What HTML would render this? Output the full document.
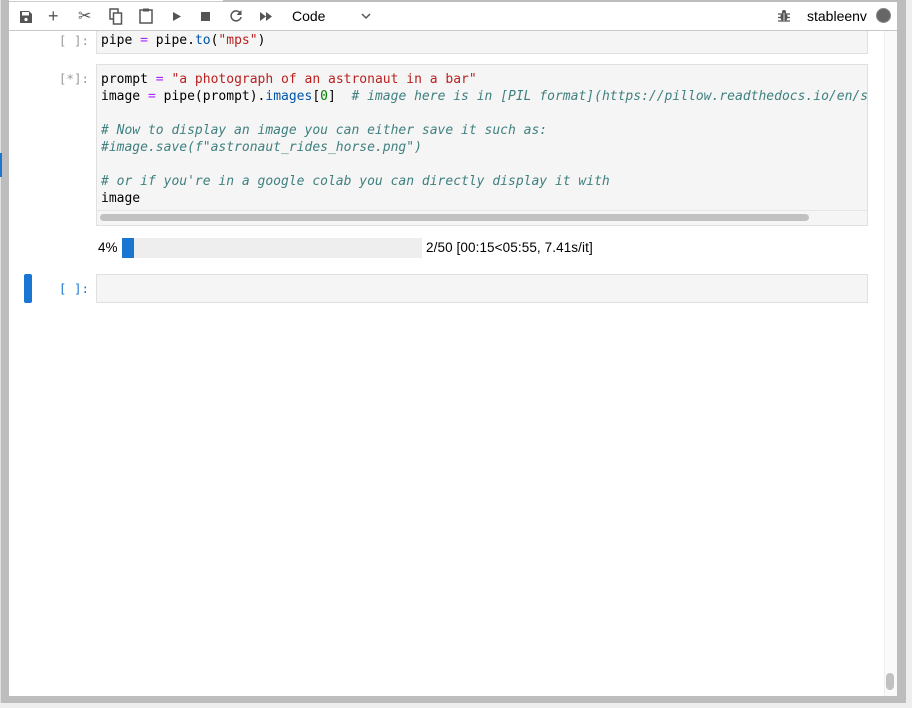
<!DOCTYPE html>
<html><head><meta charset="utf-8"><style>
*{margin:0;padding:0;box-sizing:border-box}
body{width:912px;height:708px;background:#eeeeee;position:relative;overflow:hidden;font-family:"Liberation Sans",Arial,sans-serif}
.abs{position:absolute}
.mono{font-family:"DejaVu Sans Mono","Liberation Mono",monospace;font-size:13px;line-height:17px;white-space:pre;color:#000}
.k{color:#aa22ff}.s{color:#ba2121}.f{color:#0055aa}.n{color:#008000}.c{color:#408080;font-style:italic}
.lbl{font-family:"DejaVu Sans Mono","Liberation Mono",monospace;font-size:12.5px;color:#999;text-align:right;width:81px}
</style></head><body>
<div class="abs" style="left:0;top:0;width:9px;height:703px;background:#bdbdbd"></div>
<div class="abs" style="left:0;top:0;width:1px;height:703px;background:#e0e0e0"></div>
<div class="abs" style="left:0;top:153px;width:2px;height:24px;background:#1976d2"></div>
<div class="abs" style="left:9px;top:696px;width:897px;height:7px;background:#bdbdbd"></div>
<div class="abs" style="left:897px;top:0;width:9px;height:703px;background:#bdbdbd"></div>
<div class="abs" style="left:223px;top:0;width:683px;height:2px;background:#bdbdbd"></div>
<div class="abs" style="left:9px;top:0;width:214px;height:2px;background:#fff;border-bottom:1px solid #ccc"></div>
<div class="abs" style="left:9px;top:2px;width:888px;height:694px;background:#fff"></div>
<div class="abs" style="left:884px;top:31px;width:13px;height:665px;background:#fafafa;border-left:1px solid #eee"></div>
<div class="abs" style="left:886px;top:673px;width:8px;height:17px;background:#c1c1c1;border-radius:4px"></div>
<!-- toolbar -->
<div class="abs" style="left:9px;top:2px;width:888px;height:29px;background:#fff;border-bottom:1px solid #c8c8c8"></div>
<svg class="abs" style="left:18px;top:9px" width="16" height="16" viewBox="0 0 16 16"><path d="M2 2h9l3 3v9H2z" fill="#555"/><rect x="4" y="3" width="7" height="3.5" fill="#fff"/><circle cx="8" cy="10.5" r="1.6" fill="#fff"/></svg>
<div class="abs" style="left:48px;top:6px;font-size:18px;color:#555;line-height:20px">+</div>
<div class="abs" style="left:78px;top:6px;font-size:16px;color:#555">✂</div>
<svg class="abs" style="left:109px;top:8px" width="14" height="17" viewBox="0 0 14 17"><rect x="1" y="1" width="8" height="10" fill="none" stroke="#555" stroke-width="1.5"/><rect x="4.5" y="5" width="8" height="11" fill="#fff" stroke="#555" stroke-width="1.5"/></svg>
<svg class="abs" style="left:139px;top:8px" width="14" height="16" viewBox="0 0 14 16"><rect x="1" y="2" width="12" height="13" fill="none" stroke="#555" stroke-width="1.5"/><rect x="4" y="0.5" width="6" height="3" fill="#555"/></svg>
<svg class="abs" style="left:172px;top:11px" width="10" height="11"><path d="M1 1l8 4.5L1 10z" fill="#555"/></svg>
<div class="abs" style="left:201px;top:12px;width:9px;height:9px;background:#555"></div>
<svg class="abs" style="left:229px;top:9px" width="14" height="14" viewBox="0 0 14 14"><path d="M11.5 4.5A5 5 0 1 0 12 8" fill="none" stroke="#555" stroke-width="1.5"/><path d="M12.5 1v5h-5z" fill="#555"/></svg>
<svg class="abs" style="left:259px;top:12px" width="14" height="9"><path d="M1 0l6 4.5L1 9zM7 0l6 4.5L7 9z" fill="#555"/></svg>
<div class="abs" style="left:292px;top:8px;font-size:14px;color:#000">Code</div>
<svg class="abs" style="left:361px;top:13px" width="10" height="7"><path d="M1 1l4 4 4-4" fill="none" stroke="#555" stroke-width="1.5"/></svg>
<svg class="abs" style="left:778px;top:9px" width="12" height="14" viewBox="0 0 12 14"><ellipse cx="6" cy="8" rx="3.6" ry="4.5" fill="#555"/><circle cx="6" cy="3" r="2" fill="#555"/><path d="M0 5h12M0 8.5h12M0 12h12" stroke="#555" stroke-width="1.3"/><path d="M6 4v8" stroke="#fff" stroke-width="0.8"/></svg>
<div class="abs" style="left:807px;top:8px;font-size:14px;color:#000">stableenv</div>
<div class="abs" style="left:876px;top:8px;width:15px;height:15px;border-radius:50%;background:#666;border:1px solid #888"></div>

<!-- cell 1 -->
<div class="abs" style="left:96px;top:31px;width:772px;height:23px;background:#f5f5f5;border:1px solid #e0e0e0;border-top:none"></div>
<div class="abs lbl" style="left:8px;top:33px">[ ]:</div>
<div class="abs mono" style="left:101px;top:32px">pipe <span class="k">=</span> pipe<span>.</span><span class="f">to</span>(<span class="s">"mps"</span>)</div>

<!-- cell 2 -->
<div class="abs" style="left:96px;top:64px;width:772px;height:162px;background:#f5f5f5;border:1px solid #e0e0e0"></div>
<div class="abs lbl" style="left:8px;top:71px">[*]:</div>
<div class="abs mono" style="left:101px;top:71px">prompt <span class="k">=</span> <span class="s">"a photograph of an astronaut in a bar"</span>
image <span class="k">=</span> pipe(prompt)<span>.</span><span class="f">images</span>[<span class="n">0</span>]  <span class="c"># image here is in [PIL format](https://pillow.readthedocs.io/en/s</span>

<span class="c"># Now to display an image you can either save it such as:</span>
<span class="c">#image.save(f"astronaut_rides_horse.png")</span>

<span class="c"># or if you're in a google colab you can directly display it with</span>
image</div>
<div class="abs" style="left:97px;top:210px;width:770px;height:1px;background:#e6e6e6"></div>
<div class="abs" style="left:100px;top:214px;width:709px;height:7px;background:#c1c1c1;border-radius:4px"></div>

<!-- progress -->
<div class="abs" style="left:98px;top:240px;font-size:13.5px;color:#000">4%</div>
<div class="abs" style="left:122px;top:238px;width:300px;height:20px;background:#eeeeee"></div>
<div class="abs" style="left:122px;top:238px;width:12px;height:20px;background:#1976d2"></div>
<div class="abs" style="left:426px;top:240px;font-size:13.5px;color:#000;letter-spacing:0.1px">2/50 [00:15&lt;05:55, 7.41s/it]</div>

<!-- cell 3 -->
<div class="abs" style="left:24px;top:274px;width:8px;height:29px;background:#1976d2;border-radius:2px"></div>
<div class="abs lbl" style="left:8px;top:281px;color:#1976d2">[ ]:</div>
<div class="abs" style="left:96px;top:274px;width:772px;height:29px;background:#f5f5f5;border:1px solid #e0e0e0"></div>
</body></html>
